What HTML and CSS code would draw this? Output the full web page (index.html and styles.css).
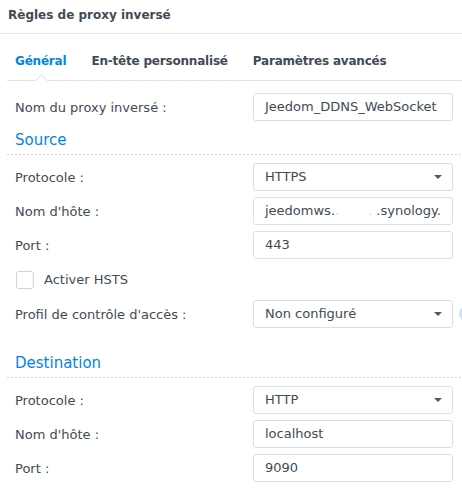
FILE: index.html
```html
<!DOCTYPE html>
<html lang="fr">
<head>
  <meta charset="UTF-8" />
  <title>Règles de proxy inversé</title>
  <link rel="stylesheet" href="styles.css">
</head>
<body>
  <div class="header">Règles de proxy inversé</div>

  <div class="tabs">
    <div class="tab active">Général</div>
    <div class="tab">En-tête personnalisé</div>
    <div class="tab">Paramètres avancés</div>
  </div>

  <div class="form">
    <div class="row first">
      <label>Nom du proxy inversé :</label>
      <div class="field">Jeedom_DDNS_WebSocket</div>
    </div>

    <!-- Source -->
    <div class="section">Source</div>
    <div class="row">
      <label>Protocole :</label>
      <div class="field select">HTTPS<span class="arrow"></span></div>
    </div>
    <div class="row">
      <label>Nom d'hôte :</label>
      <div class="field">jeedomws.<span class="blur">.&nbsp;&nbsp;&nbsp;&nbsp;&nbsp;&nbsp;&nbsp;.</span>&nbsp;.synology.</div>
    </div>
    <div class="row">
      <label>Port :</label>
      <div class="field">443</div>
    </div>
    <div class="row check">
      <span class="box"></span>
      <span>Activer HSTS</span>
    </div>
    <div class="row">
      <label>Profil de contrôle d'accès :</label>
      <div class="field select">Non configuré<span class="arrow"></span></div>
      <span class="info"></span>
    </div>

    <!-- Destination -->
    <div class="section dest">Destination</div>
    <div class="row">
      <label>Protocole :</label>
      <div class="field select">HTTP<span class="arrow"></span></div>
    </div>
    <div class="row">
      <label>Nom d'hôte :</label>
      <div class="field">localhost</div>
    </div>
    <div class="row">
      <label>Port :</label>
      <div class="field">9090</div>
    </div>
  </div>
</body>
</html>
```

FILE: styles.css
```css
body { margin: 0; background: #fff; color: #414b55; font-family: "DejaVu Sans", Verdana, sans-serif; font-size: 13px; overflow: hidden; }
.header { height: 33px; line-height: 31px; padding-left: 8px; font-size: 12px; font-weight: bold; border-bottom: 1px solid #e2e9f0; }
.tabs { position: relative; height: 46px; margin-left: 7px; padding-left: 8px; display: flex; align-items: flex-end; gap: 25px; border-bottom: 1px solid #dbe4ed; }
.tab { font-size: 12px; font-weight: bold; letter-spacing: -0.2px; line-height: 16px; padding-bottom: 11px; white-space: nowrap; }
.tab.active { color: #0086e5; position: relative; }
.tab.active::after { content: ""; position: absolute; left: 22px; bottom: -5px; width: 8px; height: 8px; background: #fff; border-top: 1px solid #dbe4ed; border-left: 1px solid #dbe4ed; transform: rotate(45deg); }
.form { padding-left: 7px; }
.row { display: flex; align-items: center; height: 28px; margin-top: 6px; padding-left: 8px; }
.row.first { margin-top: 12px; }
.row label { flex: none; width: 238px; white-space: nowrap; }
.field { flex: none; position: relative; box-sizing: border-box; width: 200px; height: 28px; line-height: 26px; padding-left: 11px; border: 1px solid #d6e0ea; border-radius: 3px; white-space: nowrap; overflow: hidden; }
.blur { color: #d4d8dd; }
.arrow { position: absolute; right: 10px; top: 11px; border-left: 4px solid transparent; border-right: 4px solid transparent; border-top: 4px solid #4f5863; }
.info { flex: none; width: 16px; height: 16px; margin-left: 6px; border-radius: 50%; background: #cfe3f6; }
.section { margin-top: 9px; padding-left: 8px; font-size: 15px; line-height: 20px; color: #0086e5; background: repeating-linear-gradient(to right, #cbd9e6 0 2px, transparent 2px 4px) bottom / 100% 1px no-repeat; padding-bottom: 5px; margin-bottom: 8px; }
.section.dest { margin-top: 25px; }
.section + .row { margin-top: 0; }
.row.check { height: 29px; padding-left: 9px; gap: 10px; }
.box { width: 16px; height: 16px; border: 1px solid #c9d4df; border-radius: 3px; }
```
